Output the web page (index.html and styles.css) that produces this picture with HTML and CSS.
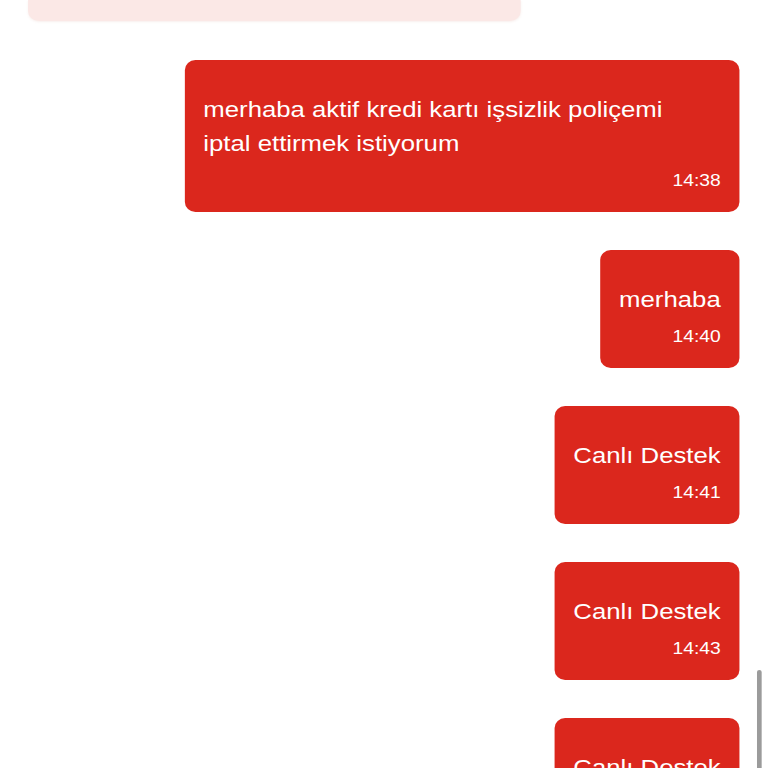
FILE: index.html
```html
<!DOCTYPE html>
<html lang="tr">
<head>
<meta charset="utf-8">
<title>Sohbet</title>
<link rel="stylesheet" href="styles.css">
</head>
<body>
<div class="screen">
  <div class="chat">
    <div class="bubble received"></div>
    <div class="bubble sent wide">
      <p class="text">merhaba aktif kredi kartı işsizlik poliçemi<br>iptal ettirmek istiyorum</p>
      <span class="time">14:38</span>
    </div>
    <div class="bubble sent">
      <p class="text">merhaba</p>
      <span class="time">14:40</span>
    </div>
    <div class="bubble sent">
      <p class="text">Canlı Destek</p>
      <span class="time">14:41</span>
    </div>
    <div class="bubble sent">
      <p class="text">Canlı Destek</p>
      <span class="time">14:43</span>
    </div>
    <div class="bubble sent">
      <p class="text">Canlı Destek</p>
      <span class="time">14:44</span>
    </div>
  </div>
  <div class="scrollbar"></div>
</div>
</body>
</html>
```

FILE: styles.css
```css
html, body {
  margin: 0;
  padding: 0;
  height: 768px;
  overflow: hidden;
  background: #ffffff;
}

.screen {
  position: relative;
  width: 656px;
  height: 768px;
  overflow: hidden;
  transform: scaleX(1.17);
  transform-origin: 0 0;
  font-family: "Liberation Sans", Arial, Helvetica, sans-serif;
}

.chat {
  display: flex;
  flex-direction: column;
  padding: 0 24px;
}

.bubble {
  box-sizing: border-box;
  border-radius: 9px / 10px;
  margin-bottom: 38px;
}

.received {
  width: 421px;
  height: 21px;
  margin-bottom: 39px;
  background: #fbe8e6;
  border-radius: 0 0 9px 9px / 0 0 10px 10px;
  box-shadow: 0 1px 2px rgba(200, 120, 110, 0.12);
}

.sent {
  align-self: flex-end;
  max-width: 78%;
  display: flex;
  flex-direction: column;
  align-items: flex-end;
  padding: 33px 16px 22px 16px;
  background: #db271d;
  color: #ffffff;
}

.sent.wide {
  width: 78%;
}

.text {
  margin: 0;
  align-self: stretch;
  font-size: 22px;
  line-height: 34px;
  text-align: left;
}

.time {
  margin-top: 10px;
  font-size: 16.5px;
  line-height: 19px;
}

.scrollbar {
  position: absolute;
  right: 5px;
  top: 670px;
  width: 4.5px;
  height: 110px;
  border-radius: 2px;
  background: #9b9b9b;
}
```
